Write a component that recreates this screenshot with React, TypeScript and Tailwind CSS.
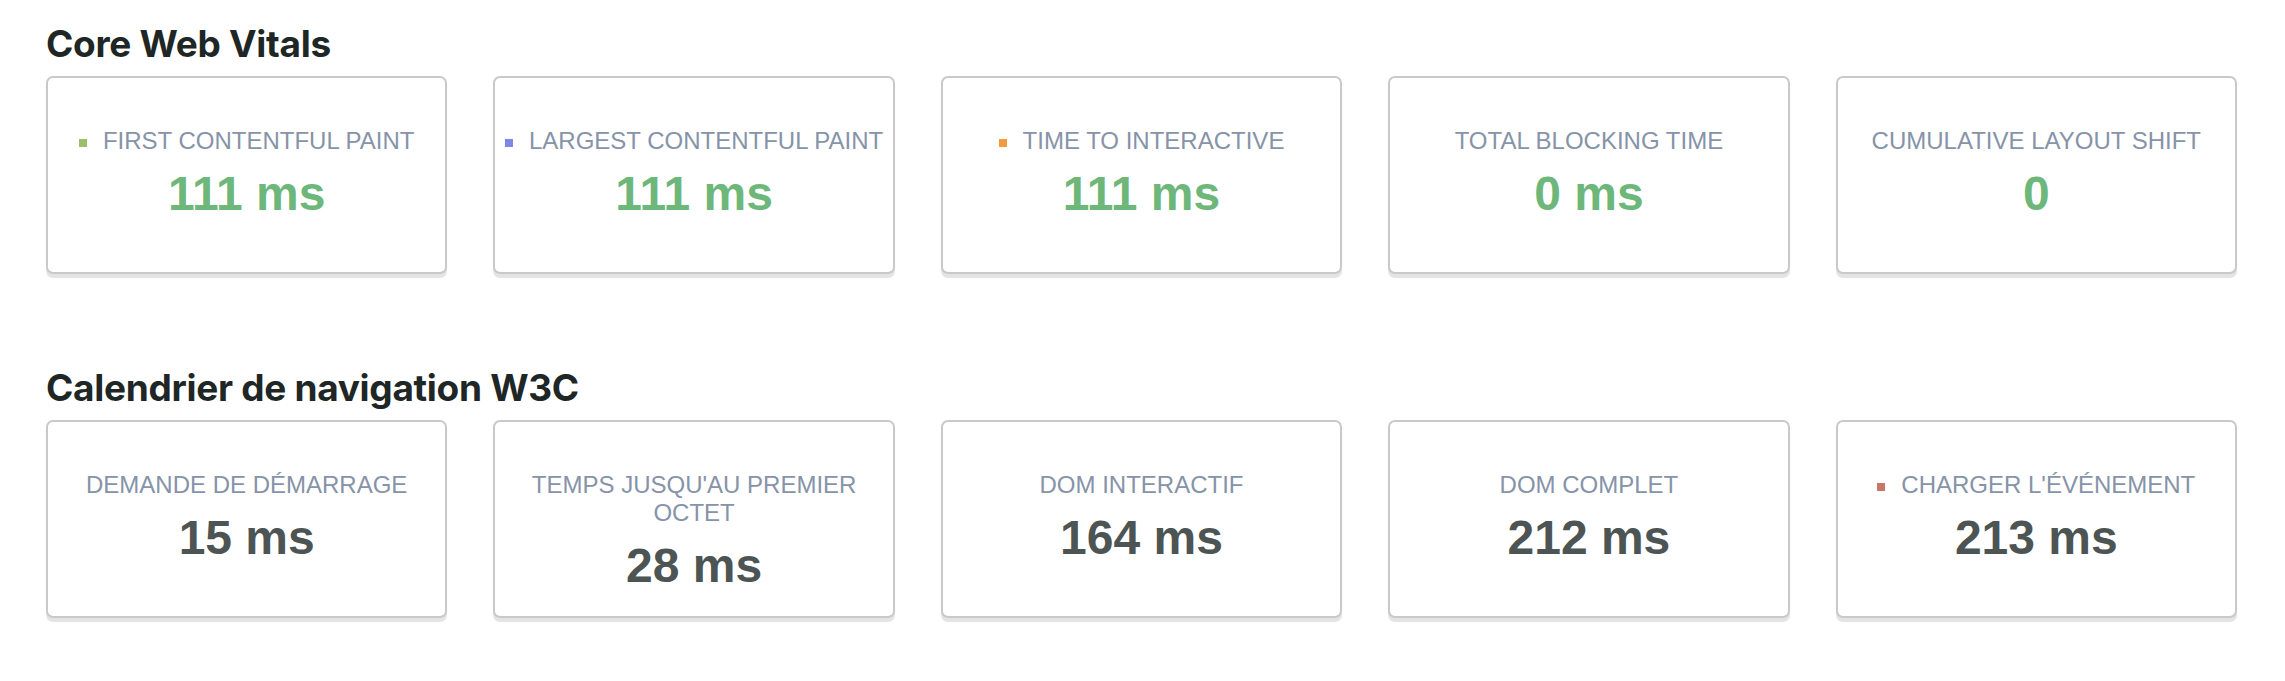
import React from 'react'

type Metric = {
  label: string
  value: string
  dot?: string
  good?: boolean
}

const vitals: Metric[] = [
  { label: 'FIRST CONTENTFUL PAINT', value: '111 ms', dot: 'bg-[#99c069]', good: true },
  { label: 'LARGEST CONTENTFUL PAINT', value: '111 ms', dot: 'bg-[#7c87ea]', good: true },
  { label: 'TIME TO INTERACTIVE', value: '111 ms', dot: 'bg-[#f29a3c]', good: true },
  { label: 'TOTAL BLOCKING TIME', value: '0 ms', good: true },
  { label: 'CUMULATIVE LAYOUT SHIFT', value: '0', good: true },
]

const timing: Metric[] = [
  { label: 'DEMANDE DE DÉMARRAGE', value: '15 ms' },
  { label: "TEMPS JUSQU'AU PREMIER OCTET", value: '28 ms' },
  { label: 'DOM INTERACTIF', value: '164 ms' },
  { label: 'DOM COMPLET', value: '212 ms' },
  { label: "CHARGER L'ÉVÉNEMENT", value: '213 ms', dot: 'bg-[#c67868]' },
]

function MetricCard({ m }: { m: Metric }) {
  return (
    <div className="h-[198px] rounded-[7px] border-2 border-[#c9c9c9] bg-white px-[6px] pt-[49px] text-center shadow-[0_4px_1px_#e4e4e4] font-['Liberation_Sans',Arial,sans-serif]">
      <div className="flex items-center justify-center text-[24px] leading-[28px] text-[#8693a8]">
        {m.dot && <span className={`mr-[16px] mt-[4px] h-[8px] w-[8px] shrink-0 ${m.dot}`} />}
        <span>{m.label}</span>
      </div>
      <div
        className={`mt-[11px] text-[48px] font-bold leading-[56px] ${
          m.good ? 'text-[#6db77b]' : 'text-[#4d5454]'
        }`}
      >
        {m.value}
      </div>
    </div>
  )
}

function Section({ title, items }: { title: string; items: Metric[] }) {
  return (
    <section>
      <h2 className="mb-[10px] text-[37px] font-bold leading-[44px] tracking-[-0.3px] text-[#1e2626] font-['Inter','Noto_Sans',sans-serif]">
        {title}
      </h2>
      <div className="grid grid-cols-5 gap-[46px]">
        {items.map((m) => (
          <MetricCard key={m.label} m={m} />
        ))}
      </div>
    </section>
  )
}

export default function App() {
  return (
    <div className="min-h-[681px] bg-white pl-[46px] pr-[48px] pt-[22px]">
      <div className="flex flex-col gap-[92px]">
        <Section title="Core Web Vitals" items={vitals} />
        <Section title="Calendrier de navigation W3C" items={timing} />
      </div>
    </div>
  )
}
